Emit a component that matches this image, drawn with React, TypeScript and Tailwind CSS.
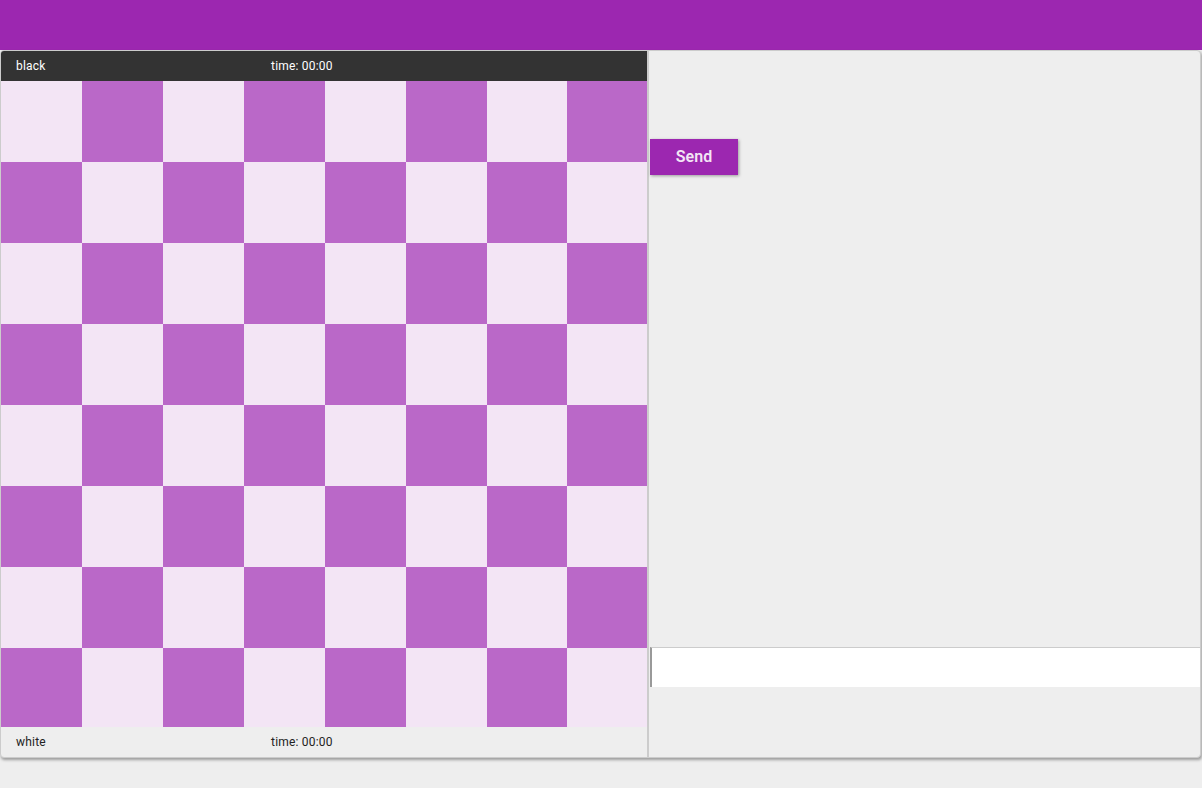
import React from "react";

export default function App() {
  const rows = Array.from({ length: 8 });
  return (
    <div className="min-h-[788px] w-[1202px] bg-[#eeeeee]" style={{ fontFamily: "Roboto, 'Liberation Sans', sans-serif" }}>
      <div className="h-[50px] bg-[#9c27b0]" />
      <div className="flex w-[1201px] h-[708px] rounded-[4px] border border-[#cccccc] bg-[#eeeeee] shadow-[1px_2px_3px_rgba(0,0,0,0.35)] overflow-hidden">
        <div className="flex flex-col w-[646px]">
          <div className="flex items-center h-[30px] bg-[#333333] text-white text-[12px] tracking-[0.2px] pl-[15px]">
            <span className="w-[255px]">black</span>
            <span>time: 00:00</span>
          </div>
          <div className="grid grid-cols-[repeat(6,81px)_80px_1fr] grid-rows-[repeat(7,81px)_1fr] h-[646px]">
            {rows.map((_, r) =>
              rows.map((_, c) => (
                <div key={`${r}-${c}`} className={(r + c) % 2 === 0 ? "bg-[#f3e5f5]" : "bg-[#ba68c8]"} />
              ))
            )}
          </div>
          <div className="flex items-center h-[30px] text-[#222] text-[12px] tracking-[0.2px] pl-[15px]">
            <span className="w-[255px]">white</span>
            <span>time: 00:00</span>
          </div>
        </div>
        <div className="w-[2px] bg-[#cccccc]" />
        <div className="flex flex-col flex-1">
          <div className="h-[88px]" />
          <button className="ml-[1px] w-[88px] h-[36px] bg-[#9c27b0] text-[#f3e5f5] text-[16px] font-semibold shadow-[1px_1px_3px_rgba(0,0,0,0.35)]">
            Send
          </button>
          <div className="flex-1" />
          <input className="ml-[1px] h-[40px] bg-white border-t border-t-[#cccccc] border-l-2 border-l-[#999999] outline-none" />
          <div className="h-[70px]" />
        </div>
      </div>
    </div>
  );
}
